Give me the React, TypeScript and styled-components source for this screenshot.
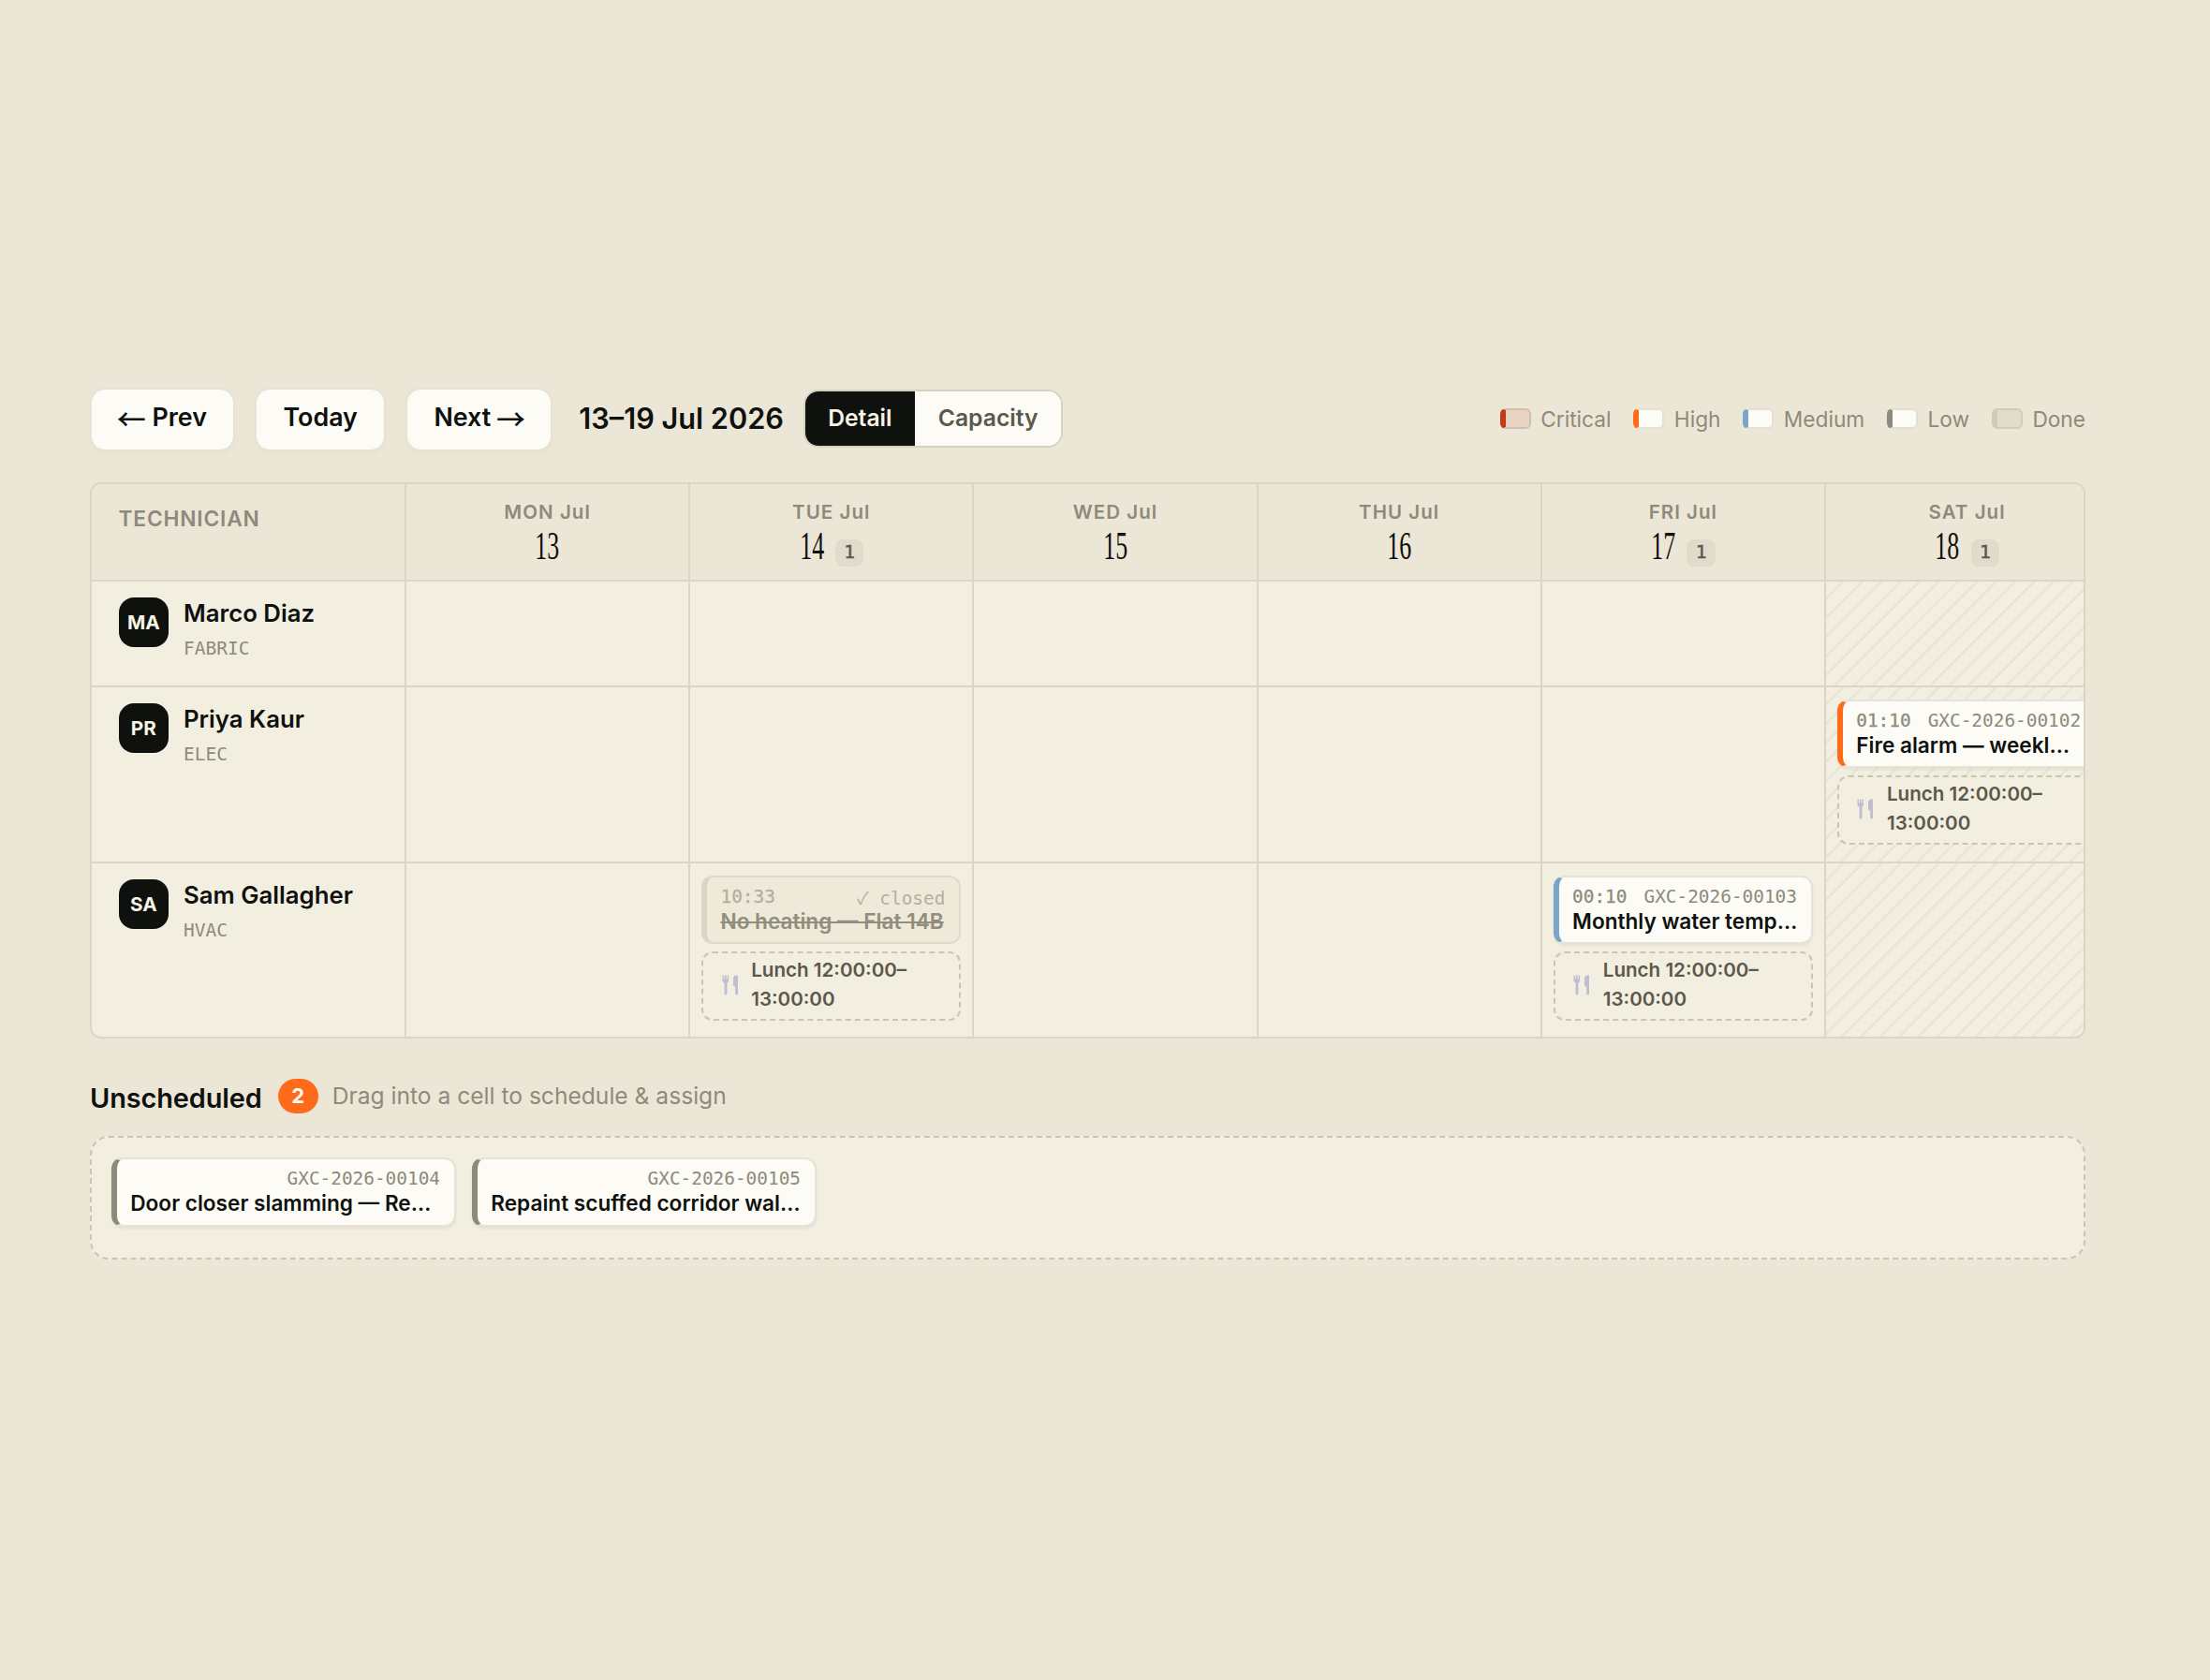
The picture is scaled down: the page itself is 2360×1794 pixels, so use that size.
import React from "react";
import styled, { createGlobalStyle } from "styled-components";

const color = {
  page: "#ece6d6",
  panel: "#f3efe0",
  line: "#dad6c6",
  dash: "#c9c5b4",
  white: "#fcfbf5",
  ink: "#0f110f",
  mid: "#5b584c",
  muted: "#8e8a7b",
  orange: "#ff6b1a",
};

const sans = `Inter, "Liberation Sans", sans-serif`;
const mono = `"DejaVu Sans Mono", "Noto Sans CJK SC", monospace`;

const GlobalStyle = createGlobalStyle`
  *, *::before, *::after { box-sizing: border-box; }
  body {
    margin: 0;
    min-height: 1794px;
    background: ${color.page};
    color: ${color.ink};
    font-family: ${sans};
  }
`;

const Page = styled.main`
  display: flex;
  flex-direction: column;
  width: 2131px;
  margin: 414px 0 0 96px;
`;

/* Toolbar */

const Toolbar = styled.div`
  display: flex;
  align-items: center;
  gap: 20.6px;
  height: 68px;
`;

const NavButton = styled.button`
  display: flex;
  align-items: center;
  gap: 7.5px;
  height: 68px;
  padding: 0 28.5px 4.5px;
  border: 2px solid #e7e2d4;
  border-radius: 16px;
  background: ${color.white};
  background-clip: padding-box;
  box-shadow: 0 2px 3px rgba(60, 50, 20, 0.03);
  color: ${color.ink};
  font: 600 26.8px/1 ${sans};
`;

const Arrow = styled.span`
  display: flex;
  justify-content: center;
  width: 27.5px;
  font-family: "Noto Sans CJK SC", sans-serif;
  font-size: 31px;
  font-weight: 500;
  line-height: 27px;

  &:first-child {
    margin-right: 1px;
  }
`;

const RangeLabel = styled.div`
  margin: -2px 0 0 8px;
  font-size: 30.7px;
  font-weight: 600;
  line-height: 38px;
  white-space: nowrap;
`;

const Toggle = styled.div`
  display: flex;
  height: 62px;
  margin-top: -2px;
  border: 2px solid #d6d2c2;
  border-radius: 16px;
  overflow: hidden;
  background: ${color.white};
`;

const ToggleItem = styled.button<{ $active?: boolean }>`
  padding: 0 24.6px 1px;
  border: 0;
  background: ${(p) => (p.$active ? color.ink : color.white)};
  color: ${(p) => (p.$active ? "#f6f2e4" : color.mid)};
  font: 600 24.7px/1 ${sans};
`;

const Legend = styled.div`
  display: flex;
  gap: 23.8px;
  margin-left: auto;
`;

const LegendItem = styled.div`
  display: flex;
  align-items: center;
  gap: 10.5px;
  color: ${color.muted};
  font-size: 22.7px;
  line-height: 28px;
`;

const Swatch = styled.span<{ $bar: string; $fill: string; $edge: string }>`
  width: 33px;
  height: 22px;
  margin-top: -2px;
  border: 2px solid ${(p) => p.$edge};
  border-left: 6px solid ${(p) => p.$bar};
  border-radius: 6px;
  background: ${(p) => p.$fill};
`;

/* Schedule board */

const Board = styled.section`
  margin-top: 33px;
  border: 2px solid ${color.line};
  border-radius: 12px;
  overflow: hidden;
  background: ${color.panel};
`;

const Row = styled.div<{ $height: number }>`
  display: grid;
  grid-template-columns: 336px repeat(6, 303.2px);
  height: ${(p) => p.$height}px;

  &:not(:first-child) {
    border-top: 2px solid ${color.line};
  }
`;

const HeadCell = styled.div`
  display: flex;
  flex-direction: column;
  align-items: center;
  padding-top: 17.6px;
  border-right: 2px solid ${color.line};
  background: ${color.page};
`;

const CornerCell = styled(HeadCell)`
  align-items: flex-start;
  padding: 23.2px 0 0 28.5px;
  color: ${color.muted};
  font-size: 22.7px;
  font-weight: 600;
  line-height: 28px;
  letter-spacing: 0.85px;
`;

const DayName = styled.div`
  color: ${color.muted};
  font-size: 20.5px;
  font-weight: 600;
  line-height: 24px;
  letter-spacing: 1.05px;
`;

const DayLine = styled.div`
  display: flex;
  align-items: flex-start;
  gap: 11.5px;
`;

const DayNumber = styled.div`
  display: flex;
  justify-content: center;
  width: 27px;
  font-family: "Liberation Serif", serif;
  font-size: 42.5px;
  line-height: 48px;

  & > span {
    transform: scaleX(0.61);
  }
`;

const CountBadge = styled.div`
  width: 30.5px;
  height: 29px;
  margin-top: 17.5px;
  border-radius: 8px;
  background: #e0dbca;
  color: ${color.mid};
  font: 400 19.5px/28px ${mono};
  -webkit-text-stroke: 0.5px currentColor;
  text-align: center;
`;

const PersonCell = styled.div`
  display: flex;
  gap: 16px;
  padding: 16.6px 0 0 28.5px;
  border-right: 2px solid ${color.line};
`;

const Avatar = styled.div`
  width: 53.5px;
  height: 53.5px;
  border-radius: 16px;
  background: ${color.ink};
  color: #f8f4e6;
  font-size: 20.7px;
  font-weight: 700;
  line-height: 53.5px;
  text-align: center;
`;

const PersonName = styled.div`
  font-size: 25.75px;
  font-weight: 600;
  line-height: 34.6px;
`;

const Trade = styled.div`
  margin-top: 8.6px;
  color: ${color.muted};
  font: 400 19.5px/24px ${mono};
`;

const DayCell = styled.div<{ $weekend?: boolean }>`
  display: flex;
  flex-direction: column;
  gap: 7.2px;
  padding: 13.2px 12px 0;
  border-right: 2px solid ${color.line};
  background: ${(p) =>
    p.$weekend
      ? `repeating-linear-gradient(135deg, transparent 0 11.2px, #e9e5d6 12px 14px, transparent 14.43px)`
      : "none"};
`;

/* Work order cards */

const Card = styled.article<{ $bar: string; $closed?: boolean; $width?: number }>`
  width: ${(p) => (p.$width ? `${p.$width}px` : "auto")};
  height: 73.2px;
  padding: 8.5px 15px 0 14.3px;
  border: 2px solid ${(p) => (p.$closed ? "#dedac9" : "#e6e2d5")};
  border-left: 6px solid ${(p) => p.$bar};
  border-radius: 12px;
  background: ${(p) => (p.$closed ? "#efe9da" : color.white)};
  box-shadow: ${(p) => (p.$closed ? "none" : "0 2px 3px rgba(60, 50, 20, 0.08)")};
`;

const CardMeta = styled.div<{ $closed?: boolean }>`
  display: flex;
  justify-content: space-between;
  height: 24px;
  color: ${(p) => (p.$closed ? "#b3af9f" : color.muted)};
  font: 400 19.4px/24px ${mono};
  white-space: pre;
`;

const StartTime = styled.span`
  -webkit-text-stroke: 0.3px currentColor;
`;

const Check = styled.span`
  font-family: "Noto Sans CJK SC", sans-serif;
  font-size: 18.5px;
`;

const CardTitle = styled.div<{ $closed?: boolean }>`
  overflow: hidden;
  margin: 0.5px -4px 0 0;
  color: ${(p) => (p.$closed ? "#918e7e" : color.ink)};
  font-size: 22.6px;
  font-weight: 600;
  line-height: 28px;
  text-decoration: ${(p) => (p.$closed ? "line-through" : "none")};
  white-space: nowrap;
`;

const LunchBox = styled.div`
  display: flex;
  align-items: center;
  gap: 13.5px;
  height: 74px;
  padding: 0 0 1px 19.5px;
  border: 2px dashed ${color.dash};
  border-radius: 12px;
  background: ${color.panel};
  color: ${color.mid};
  font-size: 20.6px;
  font-weight: 600;
  line-height: 30.7px;
`;

/* Unscheduled */

const TrayHeader = styled.div`
  display: flex;
  align-items: center;
  height: 38px;
  margin-top: 42px;
`;

const TrayTitle = styled.h2`
  margin: 5px 17px 0 0;
  font-size: 28.9px;
  font-weight: 600;
  line-height: 36px;
  letter-spacing: -0.1px;
`;

const TrayCount = styled.span`
  width: 43px;
  height: 37px;
  margin-right: 15px;
  border-radius: 19px;
  background: ${color.orange};
  color: #fffaf0;
  font-size: 22px;
  font-weight: 700;
  line-height: 36px;
  text-align: center;
`;

const TrayHint = styled.span`
  color: ${color.muted};
  font-size: 24.6px;
  line-height: 30px;
`;

const Tray = styled.section`
  display: flex;
  gap: 17px;
  height: 132px;
  margin-top: 24.4px;
  padding: 21px;
  border: 2px dashed ${color.dash};
  border-radius: 20px;
  background: ${color.panel};
`;

function Cutlery() {
  return (
    <svg width="18" height="22" viewBox="0 0 18 22" fill="#c3bbd2">
      <path d="M.5.500h1.400v4h1V.500h1.800v4h1V.500h1.400v5.600c0 1.200-.7 2-1.600 2.400v11.600c0 .8-.6 1.300-1.500 1.300s-1.400-.5-1.400-1.300V8.500C1.300 8.100.5 7.300.5 6.100z" />
      <path d="M12 4c0-2 1.200-3.500 3.300-3.500H17v19.600c0 .8-.5 1.300-1.400 1.300s-1.400-.5-1.400-1.300v-7.400c-1.400-.2-2.200-1-2.200-2.200z" />
    </svg>
  );
}

function Lunch() {
  return (
    <LunchBox>
      <Cutlery />
      <div>
        Lunch 12:00:00–
        <br />
        13:00:00
      </div>
    </LunchBox>
  );
}

type Job = { time?: string; code: string; title: string; bar: string; closed?: boolean };

function JobCard({ job, width }: { job: Job; width?: number }) {
  return (
    <Card $bar={job.bar} $closed={job.closed} $width={width}>
      <CardMeta $closed={job.closed}>
        <StartTime>{job.time}</StartTime>
        <span>
          {job.closed && <Check>✓</Check>}
          {job.closed ? " " : ""}
          {job.code}
        </span>
      </CardMeta>
      <CardTitle $closed={job.closed}>{job.title}</CardTitle>
    </Card>
  );
}

const days: { name: string; num: number; count?: number }[] = [
  { name: "MON Jul", num: 13 },
  { name: "TUE Jul", num: 14, count: 1 },
  { name: "WED Jul", num: 15 },
  { name: "THU Jul", num: 16 },
  { name: "FRI Jul", num: 17, count: 1 },
  { name: "SAT Jul", num: 18, count: 1 },
];

const people: { initials: string; name: string; trade: string; height: number; jobs: Record<number, Job> }[] = [
  { initials: "MA", name: "Marco Diaz", trade: "FABRIC", height: 113, jobs: {} },
  {
    initials: "PR",
    name: "Priya Kaur",
    trade: "ELEC",
    height: 188,
    jobs: { 18: { time: "01:10", code: "GXC-2026-00102", title: "Fire alarm — weekl…", bar: color.orange } },
  },
  {
    initials: "SA",
    name: "Sam Gallagher",
    trade: "HVAC",
    height: 187,
    jobs: {
      14: { time: "10:33", code: "closed", title: "No heating — Flat 14B", bar: "#dad6c6", closed: true },
      17: { time: "00:10", code: "GXC-2026-00103", title: "Monthly water temp…", bar: "#7ba5c9" },
    },
  },
];

const legend = [
  { label: "Critical", bar: "#c23a16", fill: "#e9d4c3", edge: "#d3bfae" },
  { label: "High", bar: color.orange, fill: color.white, edge: "#e6e1d4" },
  { label: "Medium", bar: "#7ba5c9", fill: color.white, edge: "#e2e0d8" },
  { label: "Low", bar: "#8e8a7b", fill: color.white, edge: "#e2dfd3" },
  { label: "Done", bar: "#cfccbc", fill: "#e1ddcc", edge: "#cfccbc" },
];

const unscheduled: Job[] = [
  { code: "GXC-2026-00104", title: "Door closer slamming — Re…", bar: "#8e8a7b" },
  { code: "GXC-2026-00105", title: "Repaint scuffed corridor wal…", bar: "#8e8a7b" },
];

export default function App() {
  return (
    <>
      <GlobalStyle />
      <Page>
        <Toolbar>
          <NavButton>
            <Arrow>←</Arrow>
            <span>Prev</span>
          </NavButton>
          <NavButton>Today</NavButton>
          <NavButton>
            <span>Next</span>
            <Arrow>→</Arrow>
          </NavButton>
          <RangeLabel>13–19 Jul 2026</RangeLabel>
          <Toggle>
            <ToggleItem $active>Detail</ToggleItem>
            <ToggleItem>Capacity</ToggleItem>
          </Toggle>
          <Legend>
            {legend.map((l) => (
              <LegendItem key={l.label}>
                <Swatch $bar={l.bar} $fill={l.fill} $edge={l.edge} />
                {l.label}
              </LegendItem>
            ))}
          </Legend>
        </Toolbar>

        <Board>
          <Row $height={102}>
            <CornerCell>TECHNICIAN</CornerCell>
            {days.map((d) => (
              <HeadCell key={d.num}>
                <DayName>{d.name}</DayName>
                <DayLine>
                  <DayNumber>
                    <span>{d.num}</span>
                  </DayNumber>
                  {d.count && <CountBadge>{d.count}</CountBadge>}
                </DayLine>
              </HeadCell>
            ))}
          </Row>
          {people.map((p) => (
            <Row key={p.name} $height={p.height}>
              <PersonCell>
                <Avatar>{p.initials}</Avatar>
                <div>
                  <PersonName>{p.name}</PersonName>
                  <Trade>{p.trade}</Trade>
                </div>
              </PersonCell>
              {days.map((d) => (
                <DayCell key={d.num} $weekend={d.num === 18}>
                  {p.jobs[d.num] && (
                    <>
                      <JobCard job={p.jobs[d.num]} />
                      <Lunch />
                    </>
                  )}
                </DayCell>
              ))}
            </Row>
          ))}
        </Board>

        <TrayHeader>
          <TrayTitle>Unscheduled</TrayTitle>
          <TrayCount>2</TrayCount>
          <TrayHint>Drag into a cell to schedule &amp; assign</TrayHint>
        </TrayHeader>
        <Tray>
          {unscheduled.map((j) => (
            <JobCard key={j.code} job={j} width={368} />
          ))}
        </Tray>
      </Page>
    </>
  );
}
